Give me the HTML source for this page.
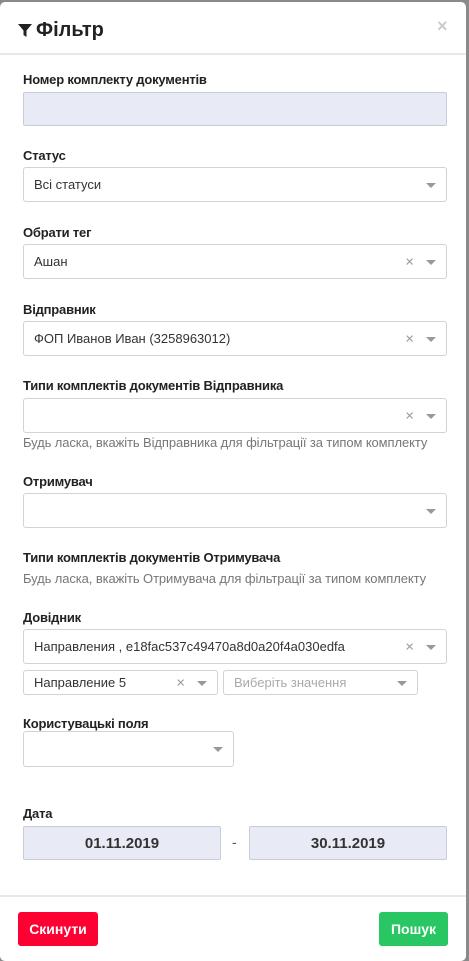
<!DOCTYPE html>
<html><head><meta charset="utf-8"><style>
*{box-sizing:border-box;margin:0;padding:0}
body{width:469px;height:961px;background:#8a8a8a;font-family:"Liberation Sans",sans-serif;position:relative;overflow:hidden}
.modal{position:absolute;left:0;top:2px;width:466px;height:959px;background:#fff;border-radius:5px}
.a{position:absolute}
.lbl{position:absolute;left:23px;font-size:13px;font-weight:bold;color:#222;letter-spacing:-0.2px}
.help{position:absolute;left:23px;font-size:13px;color:#777;letter-spacing:-0.1px}
.sel{position:absolute;border:1px solid #d3d3d3;border-radius:3px;background:#fff;font-size:13px;color:#333;padding-left:10px;display:flex;align-items:center}
.arr{position:absolute;right:10px;top:50%;margin-top:-2px;width:0;height:0;border-left:5px solid transparent;border-right:5px solid transparent;border-top:5px solid #999}
.x{position:absolute;right:32px;top:50%;transform:translateY(-50%);color:#999;font-size:15px}
.in{position:absolute;background:#e8ebf5;border:1px solid #c8ccd6;border-radius:2px}
.date{display:flex;align-items:center;justify-content:center;font-size:15px;font-weight:bold;color:#333}
.btn{position:absolute;border-radius:3px;color:#fff;font-size:14px;font-weight:bold;display:flex;align-items:center;justify-content:center}
</style></head><body>
<div class="modal">
<svg class="a" style="left:18px;top:22px" width="14" height="14" viewBox="0 0 14 14"><path d="M0 0H14L8.5 6.5V13L5.5 11V6.5Z" fill="#222"/></svg>
<div class="a" style="left:36px;top:17px;font-size:20px;font-weight:bold;color:#222">Фільтр</div>
<div class="a" style="left:437px;top:14px;font-size:18px;color:#ccc;font-weight:bold">×</div>
<div class="a" style="left:0;top:51px;width:466px;height:2px;background:#e5e8ec"></div>

<div class="lbl" style="top:70px">Номер комплекту документів</div>
<div class="in" style="left:23px;top:90px;width:424px;height:34px"></div>

<div class="lbl" style="top:146px">Статус</div>
<div class="sel" style="left:23px;top:165px;width:424px;height:35px">Всі статуси<span class="arr"></span></div>

<div class="lbl" style="top:223px">Обрати тег</div>
<div class="sel" style="left:23px;top:242px;width:424px;height:35px">Ашан<span class="x">×</span><span class="arr"></span></div>

<div class="lbl" style="top:300px">Відправник</div>
<div class="sel" style="left:23px;top:319px;width:424px;height:35px">ФОП Иванов Иван (3258963012)<span class="x">×</span><span class="arr"></span></div>

<div class="lbl" style="top:376px">Типи комплектів документів Відправника</div>
<div class="sel" style="left:23px;top:396px;width:424px;height:35px"><span class="x">×</span><span class="arr"></span></div>
<div class="help" style="top:433px">Будь ласка, вкажіть Відправника для фільтрації за типом комплекту</div>

<div class="lbl" style="top:472px">Отримувач</div>
<div class="sel" style="left:23px;top:491px;width:424px;height:35px"><span class="arr"></span></div>

<div class="lbl" style="top:548px">Типи комплектів документів Отримувача</div>
<div class="help" style="top:569px">Будь ласка, вкажіть Отримувача для фільтрації за типом комплекту</div>

<div class="lbl" style="top:608px">Довідник</div>
<div class="sel" style="left:23px;top:627px;width:424px;height:35px">Направления , e18fac537c49470a8d0a20f4a030edfa<span class="x">×</span><span class="arr"></span></div>
<div class="sel" style="left:23px;top:668px;width:195px;height:25px">Направление 5<span class="x">×</span><span class="arr"></span></div>
<div class="sel" style="left:223px;top:668px;width:195px;height:25px;color:#aaa">Виберіть значення<span class="arr"></span></div>

<div class="lbl" style="top:714px">Користувацькі поля</div>
<div class="sel" style="left:23px;top:729px;width:211px;height:36px"><span class="arr"></span></div>

<div class="lbl" style="top:804px">Дата</div>
<div class="in date" style="left:23px;top:824px;width:198px;height:34px">01.11.2019</div>
<div class="a" style="left:232px;top:832px;font-size:14px;color:#555">-</div>
<div class="in date" style="left:249px;top:824px;width:198px;height:34px">30.11.2019</div>

<div class="a" style="left:0;top:893px;width:466px;height:2px;background:#e5e8ec"></div>
<div class="btn" style="left:18px;top:910px;width:80px;height:34px;background:#ff0033">Скинути</div>
<div class="btn" style="left:379px;top:910px;width:69px;height:34px;background:#28c764">Пошук</div>
</div>
</body></html>
